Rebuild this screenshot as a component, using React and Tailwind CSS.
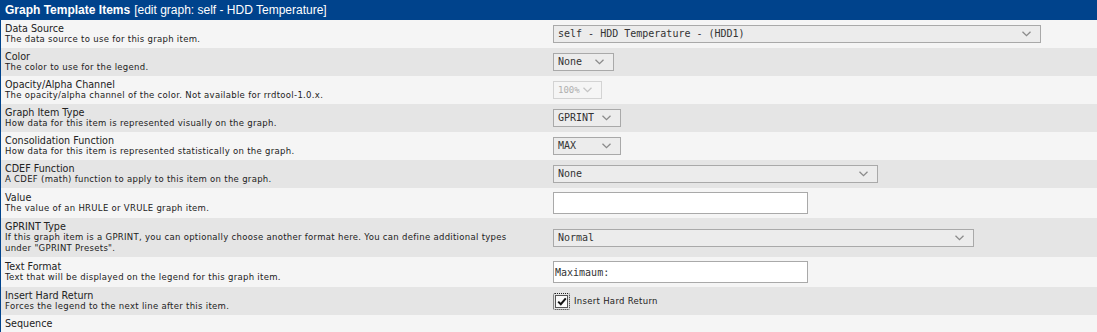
import React from 'react';

const rows = [
  { title: 'Data Source', desc: ['The data source to use for this graph item.'], ctl: { type: 'select', value: 'self - HDD Temperature - (HDD1)', w: 'w-[488px]' } },
  { title: 'Color', desc: ['The color to use for the legend.'], ctl: { type: 'select', value: 'None', w: 'w-[61px]' } },
  { title: 'Opacity/Alpha Channel', desc: ['The opacity/alpha channel of the color. Not available for rrdtool-1.0.x.'], ctl: { type: 'select', value: '100%', w: 'w-[49px]', disabled: true } },
  { title: 'Graph Item Type', desc: ['How data for this item is represented visually on the graph.'], ctl: { type: 'select', value: 'GPRINT', w: 'w-[68px]' } },
  { title: 'Consolidation Function', desc: ['How data for this item is represented statistically on the graph.'], ctl: { type: 'select', value: 'MAX', w: 'w-[68px]' } },
  { title: 'CDEF Function', desc: ['A CDEF (math) function to apply to this item on the graph.'], ctl: { type: 'select', value: 'None', w: 'w-[325px]' } },
  { title: 'Value', desc: ['The value of an HRULE or VRULE graph item.'], ctl: { type: 'input', value: '' } },
  { title: 'GPRINT Type', desc: ['If this graph item is a GPRINT, you can optionally choose another format here. You can define additional types', 'under "GPRINT Presets".'], ctl: { type: 'select', value: 'Normal', w: 'w-[421px]' } },
  { title: 'Text Format', desc: ['Text that will be displayed on the legend for this graph item.'], ctl: { type: 'input', value: 'Maximaum:' } },
  { title: 'Insert Hard Return', desc: ['Forces the legend to the next line after this item.'], ctl: { type: 'check', label: 'Insert Hard Return' } },
  { title: 'Sequence', desc: [], ctl: null },
];

const Chevron = ({ disabled }) => (
  <svg width="9" height="6" viewBox="0 0 9 6" className="shrink-0">
    <path d="M0.5 0.8 L4.5 4.6 L8.5 0.8" fill="none" stroke={disabled ? '#c4c4c4' : '#8a8a8a'} strokeWidth="1.3" />
  </svg>
);

const Select = ({ value, w, disabled }) => (
  <div
    className={`${w} h-[18px] flex items-center justify-between pl-[4px] pr-[9px] border font-['DejaVu_Sans_Mono',monospace] leading-none ${
      disabled ? 'border-[#d3d3d3] bg-[#f5f5f5] text-[#b0b0b0] text-[9px] pr-[5px]' : 'border-[#a9a9a9] bg-[#ececec] text-[#333] text-[10px]'
    }`}
  >
    <span className="whitespace-pre">{value}</span>
    <Chevron disabled={disabled} />
  </div>
);

const Input = ({ value }) => (
  <div className="w-[255px] h-[22px] my-[1px] flex items-center pl-[1px] border border-[#a9a9a9] bg-white font-['DejaVu_Sans_Mono',monospace] text-[10px] text-[#333]">
    {value}
  </div>
);

const Check = ({ label }) => (
  <div className="flex items-center">
    <div className="p-[1px] border border-dotted border-[#222] rounded-[2px]">
      <div className="w-[13px] h-[13px] border border-[#555] bg-[#fafafa] flex items-center justify-center">
        <svg width="10" height="9" viewBox="0 0 10 9">
          <path d="M1.2 4.6 L3.8 7.2 L8.8 1.4" fill="none" stroke="#111" strokeWidth="2" />
        </svg>
      </div>
    </div>
    <span className="ml-[4px] font-['DejaVu_Sans',sans-serif] text-[8.5px] text-[#222] tracking-[0.3px]">{label}</span>
  </div>
);

export default function App() {
  return (
    <div className="w-[1097px] h-[332px] overflow-hidden border-l border-[#00438c] bg-[#f5f5f5]">
      <div className="h-[20px] bg-[#00438c] flex items-center pl-[4px] font-['Liberation_Sans',Arial,sans-serif] text-[12px] text-white">
        <span className="font-bold">Graph Template Items</span>
        <span className="ml-[4px]">[edit graph: self - HDD Temperature]</span>
      </div>
      {rows.map((r, i) => (
        <div
          key={r.title}
          className={`grid grid-cols-[548px_1fr] items-center py-[3px] ${i % 2 === 1 ? 'bg-[#e5e5e5]' : 'bg-[#f5f5f5]'}`}
        >
          <div className="pl-[4px] font-['DejaVu_Sans',sans-serif] text-[#222]">
            <div className="text-[9.6px] leading-[11px]">{r.title}</div>
            {r.desc.map((d) => (
              <div key={d} className="text-[8.5px] leading-[11px] tracking-[0.3px]">{d}</div>
            ))}
          </div>
          <div className="pl-[4px]">
            {r.ctl?.type === 'select' && <Select {...r.ctl} />}
            {r.ctl?.type === 'input' && <Input value={r.ctl.value} />}
            {r.ctl?.type === 'check' && <Check label={r.ctl.label} />}
          </div>
        </div>
      ))}
    </div>
  );
}
